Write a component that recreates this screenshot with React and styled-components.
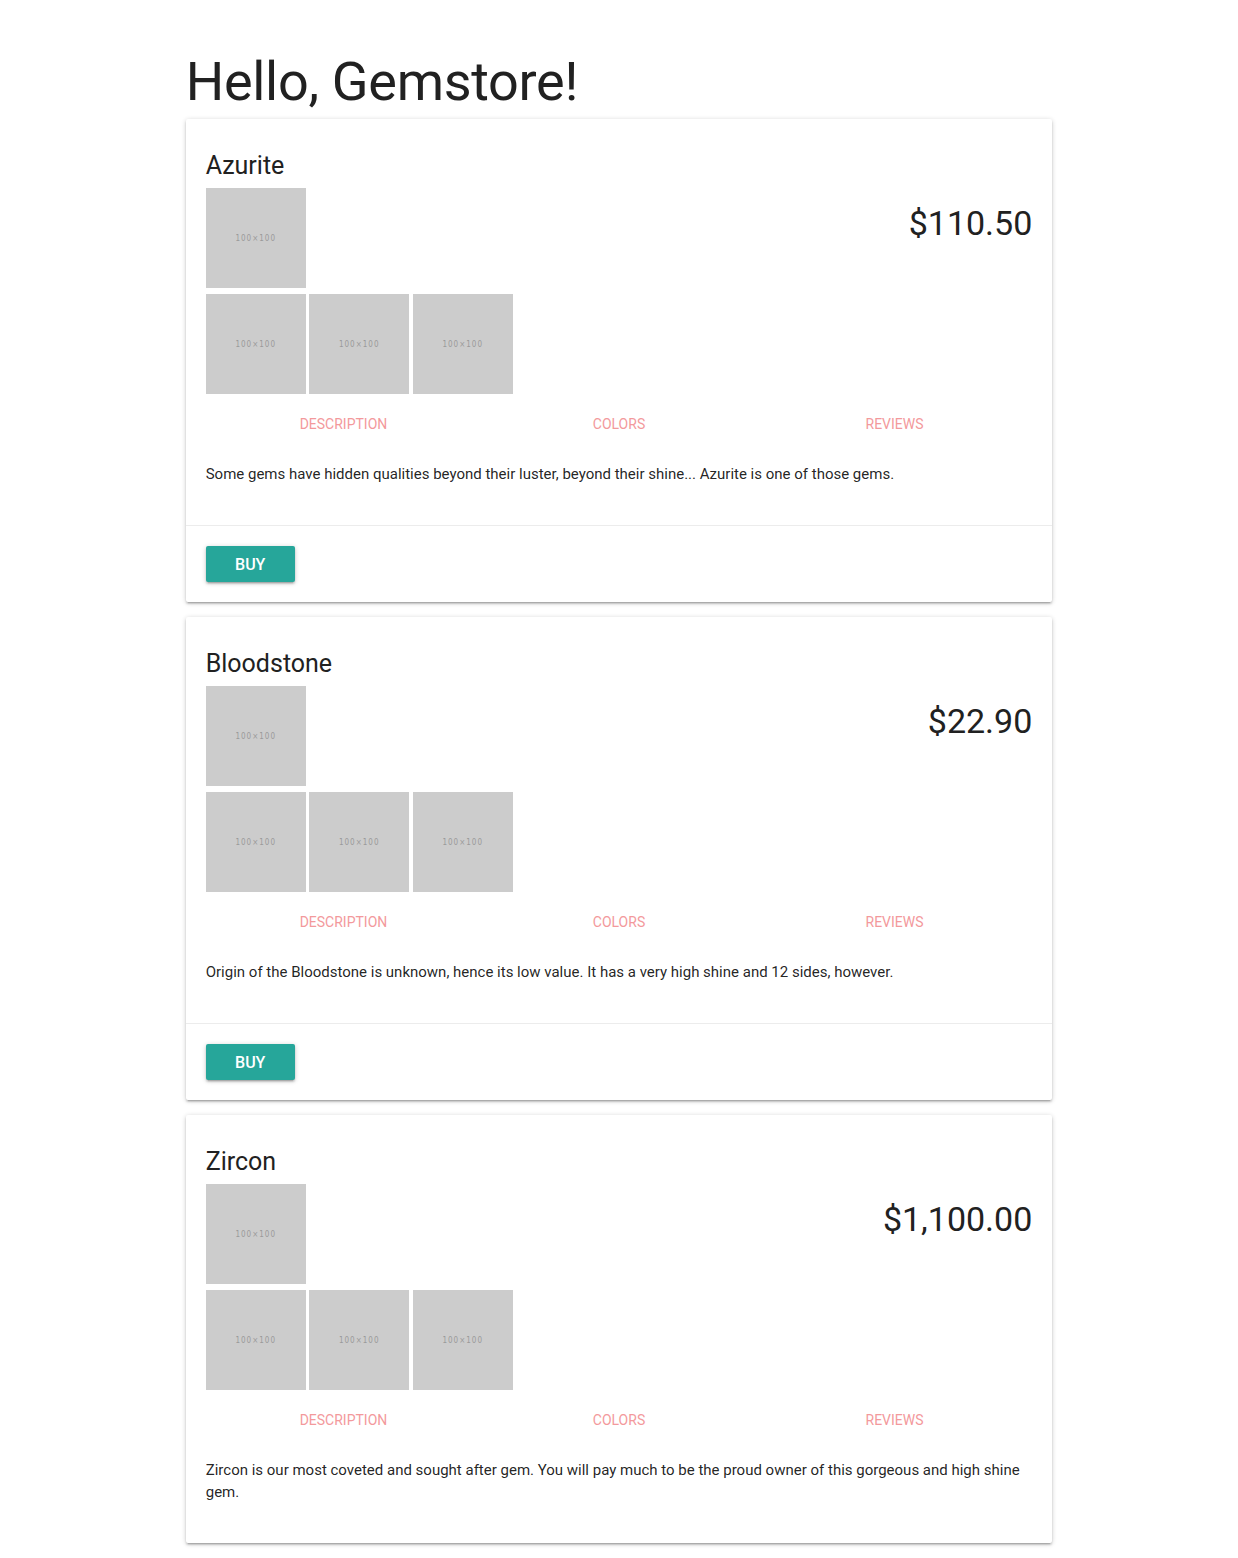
import React from "react";
import styled, { createGlobalStyle } from "styled-components";

const GlobalStyle = createGlobalStyle`
  * {
    box-sizing: border-box;
    margin: 0;
    padding: 0;
  }
  body {
    margin: 0;
    background: #fff;
    font-family: Roboto, "Liberation Sans", sans-serif;
    color: rgba(0, 0, 0, 0.87);
  }
`;

const gems = [
  {
    name: "Azurite",
    price: "$110.50",
    description:
      "Some gems have hidden qualities beyond their luster, beyond their shine... Azurite is one of those gems.",
    canPurchase: true
  },
  {
    name: "Bloodstone",
    price: "$22.90",
    description:
      "Origin of the Bloodstone is unknown, hence its low value. It has a very high shine and 12 sides, however.",
    canPurchase: true
  },
  {
    name: "Zircon",
    price: "$1,100.00",
    description:
      "Zircon is our most coveted and sought after gem. You will pay much to be the proud owner of this gorgeous and high shine gem.",
    canPurchase: false
  }
];

const Container = styled.div`
  width: 70%;
  margin: 0 auto;
  padding-top: 51px;
`;

const PageTitle = styled.h1`
  font-size: 54px;
  line-height: 62px;
  font-weight: 400;
  letter-spacing: -0.3px;
  color: #212121;
  margin-bottom: 6px;
`;

const Card = styled.div`
  background: #fff;
  border-radius: 2px;
  margin-bottom: 15px;
  box-shadow: 0 2px 2px 0 rgba(0, 0, 0, 0.14), 0 3px 1px -2px rgba(0, 0, 0, 0.12),
    0 1px 5px 0 rgba(0, 0, 0, 0.2);
`;

const CardContent = styled.div`
  padding: 20px;
`;

const GemName = styled.h2`
  font-size: 25px;
  line-height: 32px;
  font-weight: 400;
  color: #212121;
  margin: 11px 0 6px;
`;

const Row = styled.div`
  display: flex;
  justify-content: space-between;
  align-items: flex-start;
`;

const Gallery = styled.div`
  display: flex;
  flex-direction: column;
  gap: 6px;
`;

const Thumbs = styled.div`
  display: flex;
  gap: 3.5px;
`;

const Placeholder = styled.div`
  width: 100px;
  height: 100px;
  background: #cccccc;
  display: flex;
  align-items: center;
  justify-content: center;
  font-family: "DejaVu Sans Condensed", "Liberation Sans Narrow", sans-serif;
  font-size: 8px;
  letter-spacing: 1px;
  color: #9a9a9a;
`;

const Price = styled.h3`
  font-size: 34px;
  line-height: 40px;
  font-weight: 400;
  color: #212121;
  margin-top: 15px;
`;

const Tabs = styled.ul`
  list-style: none;
  display: flex;
  height: 48px;
  margin-top: 6px;
`;

const Tab = styled.li`
  flex: 1;
  display: flex;
  align-items: center;
  justify-content: center;
  font-size: 14px;
  text-transform: uppercase;
  color: #f3999c;
`;

const Description = styled.p`
  font-size: 15px;
  line-height: 22px;
  margin: 15px 0 20px;
  color: rgba(0, 0, 0, 0.87);
`;

const CardAction = styled.div`
  border-top: 1px solid rgba(160, 160, 160, 0.2);
  padding: 20px;
`;

const BuyButton = styled.button`
  width: 89px;
  height: 36px;
  border: none;
  border-radius: 2px;
  background: #26a69a;
  color: #fff;
  font-family: Roboto, "Liberation Sans", sans-serif;
  font-size: 16px;
  font-weight: 500;
  text-transform: uppercase;
  cursor: pointer;
  box-shadow: 0 2px 2px 0 rgba(0, 0, 0, 0.14), 0 3px 1px -2px rgba(0, 0, 0, 0.12),
    0 1px 5px 0 rgba(0, 0, 0, 0.2);
`;

const Img = () => <Placeholder>100×100</Placeholder>;

export default function App() {
  return (
    <>
      <GlobalStyle />
      <Container>
        <PageTitle>Hello, Gemstore!</PageTitle>
        {gems.map((gem) => (
          <Card key={gem.name}>
            <CardContent>
              <GemName>{gem.name}</GemName>
              <Row>
                <Gallery>
                  <Img />
                  <Thumbs>
                    <Img />
                    <Img />
                    <Img />
                  </Thumbs>
                </Gallery>
                <Price>{gem.price}</Price>
              </Row>
              <Tabs>
                <Tab>Description</Tab>
                <Tab>Colors</Tab>
                <Tab>Reviews</Tab>
              </Tabs>
              <Description>{gem.description}</Description>
            </CardContent>
            {gem.canPurchase && (
              <CardAction>
                <BuyButton>Buy</BuyButton>
              </CardAction>
            )}
          </Card>
        ))}
      </Container>
    </>
  );
}
